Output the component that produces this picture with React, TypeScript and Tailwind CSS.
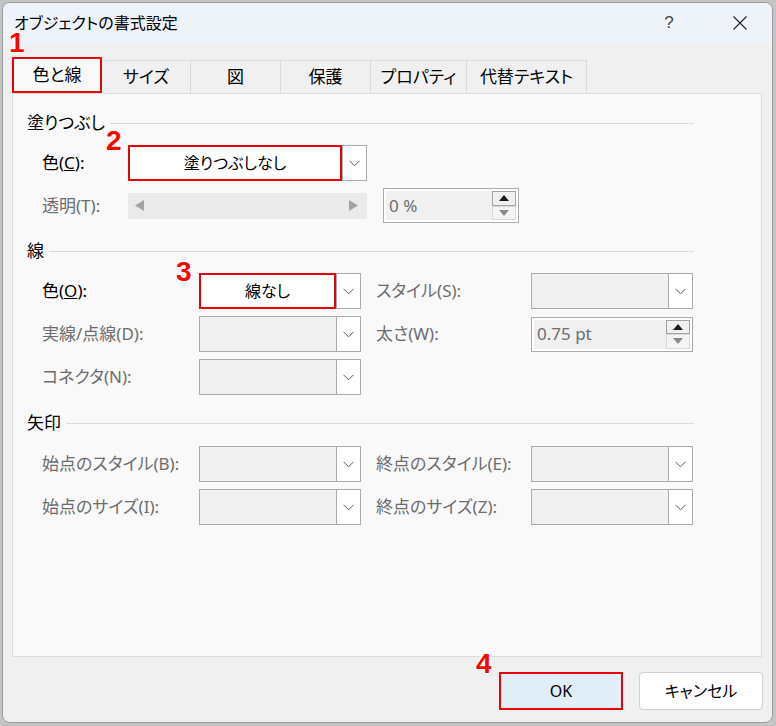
import type { ReactNode } from 'react';

const GRAY = 'text-[#6d6d6d]';

function Chevron() {
  return (
    <svg width="11" height="7" viewBox="0 0 11 7">
      <path d="M0.5 0.8 L5.5 5.8 L10.5 0.8" fill="none" stroke="#5a5a5a" strokeWidth="1" />
    </svg>
  );
}

function Dropdown({ w, text, hl, enabled }: { w: string; text?: string; hl?: boolean; enabled?: boolean }) {
  return (
    <div className={`flex h-[36px] ${w}`}>
      <div
        className={`flex-1 flex items-center justify-center text-[16px] ${
          hl
            ? 'border-2 border-[#e8000b] bg-white'
            : `border border-r-0 border-[#ababab] ${enabled ? 'bg-white' : 'bg-[#f0f0f0]'}`
        }`}
      >
        {text}
      </div>
      <div className="w-[25px] border border-[#ababab] bg-white flex items-center justify-center">
        <Chevron />
      </div>
    </div>
  );
}

function Spin({ w, value }: { w: string; value: string }) {
  return (
    <div className={`flex h-[35px] border border-[#ababab] bg-white p-[2px] ${w}`}>
      <div className={`flex-1 bg-[#f0f0f0] flex items-center pl-[3px] text-[17px] ${GRAY}`}>{value}</div>
      <div className="w-[24px] flex flex-col">
        <div className="flex-1 border border-[#a3a3a3] bg-[#f0f0f0] flex items-center justify-center">
          <svg width="10" height="6" viewBox="0 0 10 6"><path d="M0 6 L5 0 L10 6Z" fill="#1a1a1a" /></svg>
        </div>
        <div className="flex-1 border border-[#d8d8d8] bg-[#f4f4f4] flex items-center justify-center">
          <svg width="10" height="6" viewBox="0 0 10 6"><path d="M0 0 L5 6 L10 0Z" fill="#8a8a8a" /></svg>
        </div>
      </div>
    </div>
  );
}

function Section({ title, cls }: { title: string; cls: string }) {
  return (
    <div className={`flex items-center h-[20px] w-[667px] ${cls}`}>
      <span className="text-[17px] leading-[20px]">{title}</span>
      <div className="flex-1 h-px bg-[#dadada] ml-[5px]" />
    </div>
  );
}

function Label({ w, children, gray }: { w: string; children: ReactNode; gray?: boolean }) {
  return (
    <div className={`${w} shrink-0 pl-[15px] text-[17px] leading-[20px] ${gray ? GRAY : 'text-black'}`}>{children}</div>
  );
}

function Num({ n, cls }: { n: string; cls: string }) {
  return (
    <div
      className={`absolute font-['Liberation_Sans',sans-serif] font-bold text-[28px] leading-[20px] text-[#ff0000] [text-shadow:-1px_-1px_0_#fff,1px_-1px_0_#fff,-1px_1px_0_#fff,1px_1px_0_#fff,0_0_3px_#fff] ${cls}`}
    >
      {n}
    </div>
  );
}

const TABS = [
  { label: 'サイズ', w: 'w-[89px]' },
  { label: '図', w: 'w-[90px]' },
  { label: '保護', w: 'w-[90px]' },
  { label: 'プロパティ', w: 'w-[96px]' },
  { label: '代替テキスト', w: 'w-[120px]' },
];

export default function App() {
  return (
    <div className="relative w-[776px] h-[726px] bg-[#c4c4c4] pt-[2px] pl-[2px] overflow-hidden font-['Noto_Sans','Noto_Sans_CJK_JP',sans-serif] [font-feature-settings:'palt'] text-black">
      <div className="w-[771px] h-[721px] rounded-[8px] border border-[#9c9c9c] bg-[#f0f0f0] overflow-hidden flex flex-col">
        {/* タイトルバー */}
        <div className="h-[42px] bg-[#eef3fa] flex items-center pl-[11px] pr-[25px] pb-[3px] shrink-0">
          <span className="text-[16px] leading-[18px]">オブジェクトの書式設定</span>
          <span className="ml-auto w-[20px] text-center text-[17px] leading-[18px] text-[#444] font-['Liberation_Sans',sans-serif]">?</span>
          <svg className="ml-[54px]" width="14" height="14" viewBox="0 0 14 14">
            <path d="M0.5 0.5 L13.5 13.5 M13.5 0.5 L0.5 13.5" stroke="#222" strokeWidth="1.1" />
          </svg>
        </div>

        {/* タブ */}
        <div className="mt-[12px] ml-[9px] h-[36px] flex items-end shrink-0">
          <div className="w-[90px] h-[36px] border-2 border-[#e8000b] bg-[#f9f9f9] flex items-center justify-center text-[17px]">
            色と線
          </div>
          {TABS.map(t => (
            <div
              key={t.label}
              className={`${t.w} h-[33px] border-t border-r border-[#dadada] bg-[#f0f0f0] flex items-center justify-center text-[17px]`}
            >
              {t.label}
            </div>
          ))}
        </div>

        {/* パネル */}
        <div className="ml-[9px] w-[750px] h-[564px] border border-[#dcdcdc] bg-[#f9f9f9] pl-[14px] pt-[19px] shrink-0">
          <Section title="塗りつぶし" cls="" />
          <div className="mt-[12px] flex items-center">
            <Label w="w-[101px]">
              色(<span className="underline">C</span>):
            </Label>
            <Dropdown w="w-[239px]" text="塗りつぶしなし" hl />
          </div>
          <div className="mt-[7px] flex items-center h-[35px]">
            <Label w="w-[101px]" gray>透明(T):</Label>
            <div className="w-[239px] h-[26px] bg-[#eaeaea] flex items-center justify-between pl-[7px] pr-[9px]">
              <svg width="9" height="11" viewBox="0 0 9 11"><path d="M9 0 L0 5.5 L9 11Z" fill="#a3a3a3" /></svg>
              <svg width="9" height="11" viewBox="0 0 9 11"><path d="M0 0 L9 5.5 L0 11Z" fill="#a3a3a3" /></svg>
            </div>
            <Spin w="ml-[16px] w-[136px]" value="0 %" />
          </div>

          <Section title="線" cls="mt-[18px]" />
          <div className="mt-[12px] flex items-center">
            <Label w="w-[172px]">
              色(<span className="underline">O</span>):
            </Label>
            <Dropdown w="w-[162px]" text="線なし" hl />
            <div className="w-[15px]" />
            <Label w="w-[155px] !pl-0" gray>スタイル(S):</Label>
            <Dropdown w="w-[162px]" />
          </div>
          <div className="mt-[7px] flex items-center">
            <Label w="w-[172px]" gray>実線/点線(D):</Label>
            <Dropdown w="w-[162px]" />
            <div className="w-[15px]" />
            <Label w="w-[155px] !pl-0" gray>太さ(W):</Label>
            <Spin w="w-[162px]" value="0.75 pt" />
          </div>
          <div className="mt-[7px] flex items-center">
            <Label w="w-[172px]" gray>コネクタ(N):</Label>
            <Dropdown w="w-[162px]" />
          </div>

          <Section title="矢印" cls="mt-[18px]" />
          <div className="mt-[13px] flex items-center">
            <Label w="w-[172px]" gray>始点のスタイル(B):</Label>
            <Dropdown w="w-[162px]" />
            <div className="w-[15px]" />
            <Label w="w-[155px] !pl-0" gray>終点のスタイル(E):</Label>
            <Dropdown w="w-[162px]" />
          </div>
          <div className="mt-[7px] flex items-center">
            <Label w="w-[172px]" gray>始点のサイズ(I):</Label>
            <Dropdown w="w-[162px]" />
            <div className="w-[15px]" />
            <Label w="w-[155px] !pl-0" gray>終点のサイズ(Z):</Label>
            <Dropdown w="w-[162px]" />
          </div>
        </div>

        {/* ボタン */}
        <div className="mt-[15px] flex justify-end gap-[16px] pr-[9px]">
          <button className="w-[124px] h-[38px] border-2 border-[#e8000b] bg-[#e1edf8] text-[16px]">OK</button>
          <button className="w-[124px] h-[38px] border border-[#d0d0d0] rounded-[4px] bg-white text-[16px]">
            キャンセル
          </button>
        </div>
      </div>

      <Num n="1" cls="left-[9px] top-[33px]" />
      <Num n="2" cls="left-[106px] top-[131px]" />
      <Num n="3" cls="left-[176px] top-[262px]" />
      <Num n="4" cls="left-[476px] top-[654px]" />
    </div>
  );
}
